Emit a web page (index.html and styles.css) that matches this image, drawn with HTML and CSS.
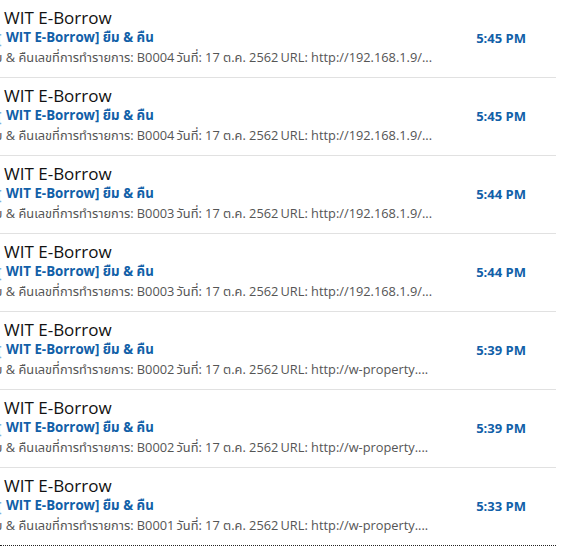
FILE: index.html
```html
<!DOCTYPE html>
<html lang="th">
<head>
    <meta charset="UTF-8">
    <title>Inbox</title>
    <link rel="stylesheet" href="styles.css">
</head>
<body>

<ul class="mail-list">
    <li class="mail">
        <div class="sender">WIT E-Borrow</div>
        <div class="line">
            <span class="subject"><span class="cut">[</span>WIT E-Borrow] ยืม &amp; คืน</span>
            <span class="time">5:45 PM</span>
        </div>
        <div class="preview">ยืม &amp; คืนเลขที่การทำรายการ: B0004&thinsp;วันที่: 17 ต.ค. 2562&thinsp;URL: http://192.168.1.9/...</div>
    </li>
    <li class="mail">
        <div class="sender">WIT E-Borrow</div>
        <div class="line">
            <span class="subject"><span class="cut">[</span>WIT E-Borrow] ยืม &amp; คืน</span>
            <span class="time">5:45 PM</span>
        </div>
        <div class="preview">ยืม &amp; คืนเลขที่การทำรายการ: B0004&thinsp;วันที่: 17 ต.ค. 2562&thinsp;URL: http://192.168.1.9/...</div>
    </li>
    <li class="mail">
        <div class="sender">WIT E-Borrow</div>
        <div class="line">
            <span class="subject"><span class="cut">[</span>WIT E-Borrow] ยืม &amp; คืน</span>
            <span class="time">5:44 PM</span>
        </div>
        <div class="preview">ยืม &amp; คืนเลขที่การทำรายการ: B0003&thinsp;วันที่: 17 ต.ค. 2562&thinsp;URL: http://192.168.1.9/...</div>
    </li>
    <li class="mail">
        <div class="sender">WIT E-Borrow</div>
        <div class="line">
            <span class="subject"><span class="cut">[</span>WIT E-Borrow] ยืม &amp; คืน</span>
            <span class="time">5:44 PM</span>
        </div>
        <div class="preview">ยืม &amp; คืนเลขที่การทำรายการ: B0003&thinsp;วันที่: 17 ต.ค. 2562&thinsp;URL: http://192.168.1.9/...</div>
    </li>
    <li class="mail">
        <div class="sender">WIT E-Borrow</div>
        <div class="line">
            <span class="subject"><span class="cut">[</span>WIT E-Borrow] ยืม &amp; คืน</span>
            <span class="time">5:39 PM</span>
        </div>
        <div class="preview">ยืม &amp; คืนเลขที่การทำรายการ: B0002&thinsp;วันที่: 17 ต.ค. 2562&thinsp;URL: http://w-property....</div>
    </li>
    <li class="mail">
        <div class="sender">WIT E-Borrow</div>
        <div class="line">
            <span class="subject"><span class="cut">[</span>WIT E-Borrow] ยืม &amp; คืน</span>
            <span class="time">5:39 PM</span>
        </div>
        <div class="preview">ยืม &amp; คืนเลขที่การทำรายการ: B0002&thinsp;วันที่: 17 ต.ค. 2562&thinsp;URL: http://w-property....</div>
    </li>
    <li class="mail selected">
        <div class="sender">WIT E-Borrow</div>
        <div class="line">
            <span class="subject"><span class="cut">[</span>WIT E-Borrow] ยืม &amp; คืน</span>
            <span class="time">5:33 PM</span>
        </div>
        <div class="preview">ยืม &amp; คืนเลขที่การทำรายการ: B0001&thinsp;วันที่: 17 ต.ค. 2562&thinsp;URL: http://w-property....</div>
    </li>
</ul>

</body>
</html>
```

FILE: styles.css
```css
:root {
    --text-color: #111111;
    --accent-color: #1160a8;
    --muted-color: #555555;
    --border-color: #e1e1e1;
    --font-ui: 'Open Sans', 'Noto Sans', 'Noto Sans Thai', Tahoma, sans-serif;
}

* { margin: 0; padding: 0; box-sizing: border-box; }

body {
    background: #ffffff;
    color: var(--text-color);
    font-family: var(--font-ui);
    overflow: hidden;
}

/* --- Mail list --- */
.mail-list {
    list-style: none;
    width: 556px;
}

.mail {
    height: 78px;
    padding: 6px 30px 0 4px;
    border-bottom: 1px solid var(--border-color);
    overflow: hidden;
}
.mail.selected {
    border-bottom: 1px dotted #222222;
    box-shadow: 0 2px 0 #d8e8f6;
}

.sender {
    font-size: 17px;
    line-height: 23px;
    white-space: nowrap;
}

.line {
    display: flex;
    align-items: center;
    justify-content: space-between;
    height: 18px;
}

.subject {
    margin-left: -4px;
    font-size: 13.3px;
    font-weight: 700;
    color: var(--accent-color);
    white-space: nowrap;
}
/* bracket cut by the pane edge: only its tip shows */
.subject .cut {
    display: inline-block;
    width: 2px;
    margin-right: 4px;
    overflow: hidden;
    text-indent: -3px;
    vertical-align: bottom;
    color: #7fb3e0;
}

.time {
    font-size: 13px;
    font-weight: 700;
    color: var(--accent-color);
}

.preview {
    margin-left: -17px;
    font-size: 12.8px;
    line-height: 20px;
    color: var(--muted-color);
    white-space: nowrap;
    overflow: hidden;
}
```
